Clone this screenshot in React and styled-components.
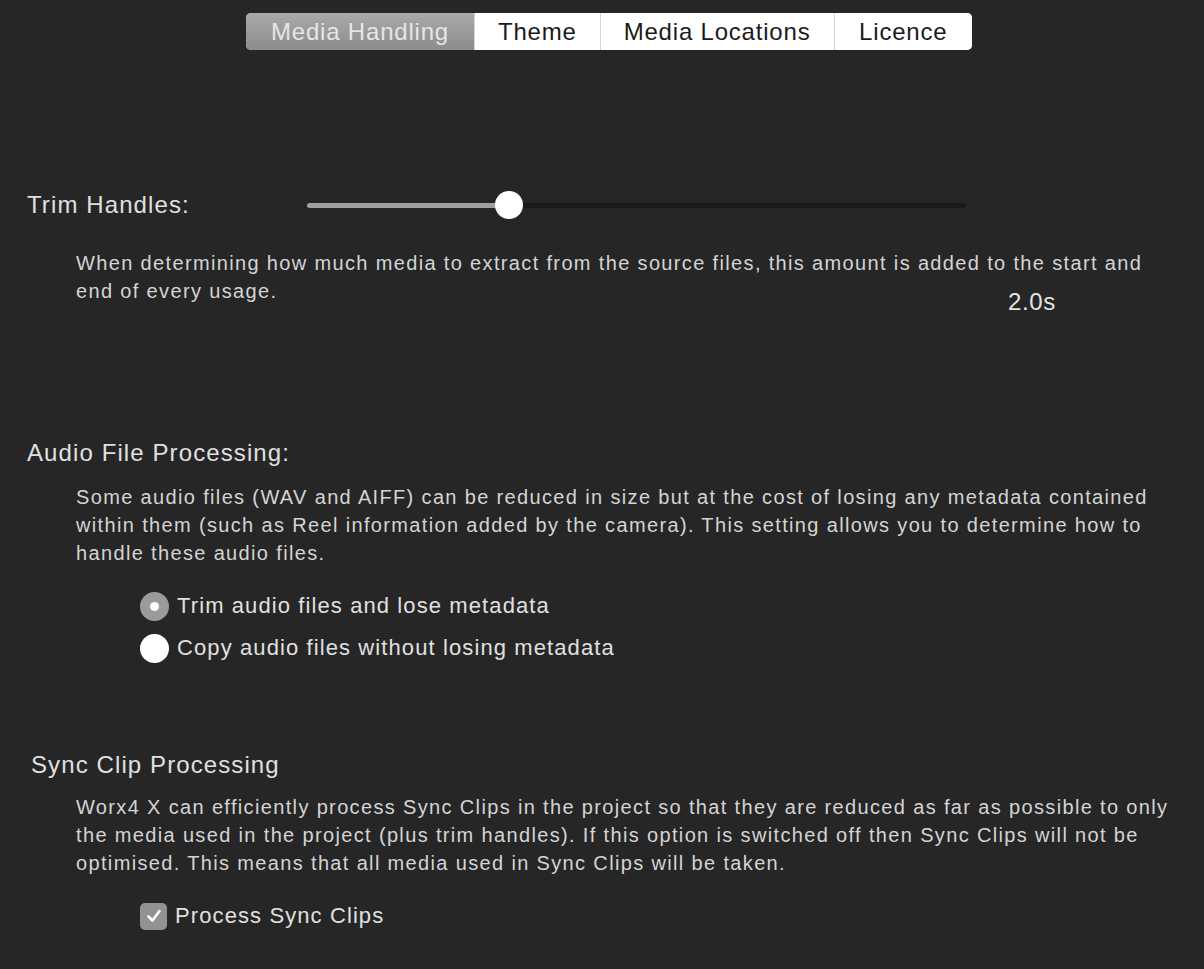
import styled, { createGlobalStyle } from 'styled-components';

const GlobalStyle = createGlobalStyle`
  html, body {
    margin: 0;
    padding: 0;
    background: #262626;
  }
  body {
    font-family: "Liberation Sans", Arial, sans-serif;
    color: #dedede;
  }
`;

const Page = styled.div`
  width: 1204px;
  min-height: 969px;
  padding-top: 13px;
  box-sizing: border-box;
`;

const TabBar = styled.div`
  display: flex;
  margin-left: 246px;
  width: 726px;
  height: 37px;
  background: #fff;
  border-radius: 5px;
  overflow: hidden;
`;

const Tab = styled.div`
  width: ${p => p.$w}px;
  display: flex;
  align-items: center;
  justify-content: center;
  font-size: 24px;
  letter-spacing: 0.8px;
  color: ${p => (p.$active ? '#e6e6e6' : '#1b1b1b')};
  background: ${p => (p.$active ? 'linear-gradient(#aaaaaa, #8c8c8c)' : '#fff')};
  border-left: ${p => (p.$first ? 'none' : '1px solid #d6d6d6')};
`;

const SliderRow = styled.div`
  display: flex;
  align-items: center;
  margin-top: 141px;
  height: 28px;
`;

const Label = styled.div`
  font-size: 24px;
  letter-spacing: 1.1px;
  color: #e0e0e0;
  padding-left: ${p => p.$indent || 27}px;
  width: ${p => (p.$w ? `${p.$w}px` : 'auto')};
  box-sizing: border-box;
  flex-shrink: 0;
`;

const Track = styled.div`
  width: 659px;
  height: 5px;
  border-radius: 3px;
  background: #1a1a1a;
  display: flex;
  align-items: center;
`;

const TrackFill = styled.div`
  height: 5px;
  border-radius: 3px;
  background: #a0a0a0;
`;

const Knob = styled.div`
  width: 28px;
  height: 28px;
  border-radius: 50%;
  background: #fff;
  margin-left: -14px;
  flex-shrink: 0;
`;

const Description = styled.p`
  margin: ${p => p.$top}px 0 0 0;
  padding-left: 76px;
  width: 1190px;
  box-sizing: border-box;
  font-size: 20px;
  letter-spacing: 1.35px;
  line-height: 28px;
  white-space: nowrap;
  color: #d4d4d4;
`;

const Value = styled.div`
  margin: -17px 0 0 1008px;
  font-size: 24px;
  letter-spacing: 0.6px;
  color: #e4e4e4;
`;

const SectionLabel = styled(Label)`
  margin-top: ${p => p.$top}px;
`;

const Options = styled.div`
  display: flex;
  flex-direction: column;
  gap: 14px;
  margin-top: ${p => p.$top}px;
  padding-left: 140px;
`;

const Option = styled.div`
  display: flex;
  align-items: center;
  gap: 8px;
  font-size: 22px;
  letter-spacing: 1.1px;
  color: #e0e0e0;
  height: 28px;
`;

const Radio = styled.div`
  width: 29px;
  height: 29px;
  border-radius: 50%;
  background: ${p => (p.$checked ? '#9b9b9b' : '#fff')};
  display: flex;
  align-items: center;
  justify-content: center;
  &::after {
    content: '';
    width: 9px;
    height: 9px;
    border-radius: 50%;
    background: #fff;
    display: ${p => (p.$checked ? 'block' : 'none')};
  }
`;

const Checkbox = styled.div`
  width: 27px;
  height: 27px;
  border-radius: 5px;
  background: #929292;
  display: flex;
  align-items: center;
  justify-content: center;
`;

export default function App() {
  const tabs = [
    { name: 'Media Handling', w: 229 },
    { name: 'Theme', w: 125 },
    { name: 'Media Locations', w: 234 },
    { name: 'Licence', w: 138 },
  ];
  const trim = 2.0;
  const pct = 202 / 659;

  return (
    <Page>
      <GlobalStyle />
      <TabBar>
        {tabs.map((t, i) => (
          <Tab key={t.name} $w={t.w} $active={i === 0} $first={i === 0}>
            {t.name}
          </Tab>
        ))}
      </TabBar>

      <SliderRow>
        <Label $w={307}>Trim Handles:</Label>
        <Track>
          <TrackFill style={{ width: `${pct * 100}%` }} />
          <Knob />
        </Track>
      </SliderRow>
      <Description $top={30}>
        When determining how much media to extract from the source files, this amount is added to the start and
        <br />
        end of every usage.
      </Description>
      <Value>{trim.toFixed(1)}s</Value>

      <SectionLabel $top={123}>Audio File Processing:</SectionLabel>
      <Description $top={16}>
        Some audio files (WAV and AIFF) can be reduced in size but at the cost of losing any metadata contained
        <br />
        within them (such as Reel information added by the camera). This setting allows you to determine how to
        <br />
        handle these audio files.
      </Description>
      <Options $top={25}>
        <Option>
          <Radio $checked />
          Trim audio files and lose metadata
        </Option>
        <Option>
          <Radio />
          Copy audio files without losing metadata
        </Option>
      </Options>

      <SectionLabel $top={89} $indent={31}>Sync Clip Processing</SectionLabel>
      <Description $top={14}>
        Worx4 X can efficiently process Sync Clips in the project so that they are reduced as far as possible to only
        <br />
        the media used in the project (plus trim handles). If this option is switched off then Sync Clips will not be
        <br />
        optimised. This means that all media used in Sync Clips will be taken.
      </Description>
      <Options $top={25}>
        <Option>
          <Checkbox>
            <svg width="18" height="18" viewBox="0 0 18 18">
              <path d="M3.5 9.5 L7.5 13.5 L14.5 4" fill="none" stroke="#fff" strokeWidth="2.6" strokeLinecap="round" strokeLinejoin="round" />
            </svg>
          </Checkbox>
          Process Sync Clips
        </Option>
      </Options>
    </Page>
  );
}
